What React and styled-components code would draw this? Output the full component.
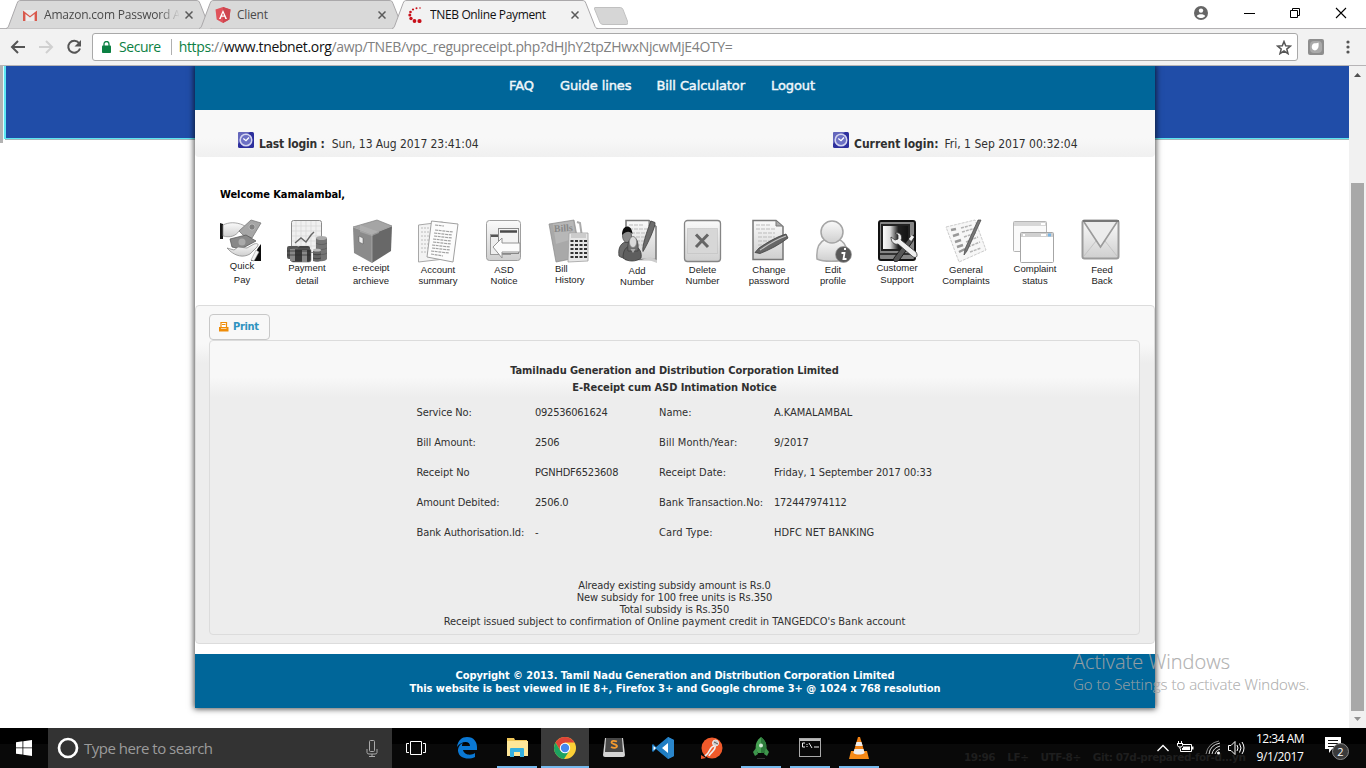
import React from "react";
import styled, { createGlobalStyle } from "styled-components";

const GlobalStyle = createGlobalStyle`
  * { box-sizing: border-box; }
  html, body { margin: 0; padding: 0; overflow: hidden; background: #fff; }
  svg { display: block; flex: none; }
`;

const UI = `"Open Sans", "Noto Sans", sans-serif`;
const TAHOMA = `"DejaVu Sans Condensed", "DejaVu Sans", sans-serif`;
const VERDANA = `"DejaVu Sans", sans-serif`;

const Screen = styled.div`
  width: 1366px;
  height: 768px;
  display: flex;
  flex-direction: column;
  overflow: hidden;
  white-space: nowrap;
`;

/* ---------- browser chrome ---------- */
const TabStrip = styled.div`
  height: 29px;
  flex: none;
  display: flex;
  padding-left: 6px;
  background: linear-gradient(#b4b2b4, #b4b2b4) left bottom / 100% 1px no-repeat #fff;
`;
const TabBox = styled.div`
  position: relative;
  width: 206px;
  height: 29px;
  margin-right: -13px;
  z-index: ${(p) => (p.$active ? 2 : 1)};
  display: flex;
  align-items: center;
  padding: 1px 19px 0 16px;
`;
const TabShape = styled.svg`
  position: absolute;
  left: 0;
  top: 0;
`;
const TabIcon = styled.span`
  position: relative;
  width: 16px;
  margin-right: 6px;
`;
const TabTitle = styled.span`
  position: relative;
  flex: 1;
  min-width: 0;
  overflow: hidden;
  font: 12px/18px ${UI};
  letter-spacing: ${(p) => p.$ls || "-0.36px"};
  color: ${(p) => (p.$active ? "#111" : "#4a4a4a")};
  ${(p) => p.$fade && "-webkit-mask-image: linear-gradient(90deg, #000 115px, transparent 136px);"}
`;
const TabClose = styled.svg`
  position: relative;
  margin-left: 6px;
`;
const NewTab = styled.svg`
  margin: 7px 0 0 9px;
`;
const WindowButtons = styled.div`
  margin-left: auto;
  display: flex;
  align-items: flex-start;
  padding: 6px 19px 0 0;
`;
const ProfileIcon = styled.svg`margin-right: 36px;`;
const MinIcon = styled.svg`margin-right: 35px;`;
const MaxIcon = styled.svg`margin-right: 34px;`;

const Toolbar = styled.div`
  height: 37px;
  flex: none;
  display: flex;
  align-items: center;
  background: #f2f2f2;
  border-bottom: 1px solid #b6b4b6;
  padding: 0 9px 0 10px;
`;
const NavIcons = styled.div`
  display: flex;
  gap: 12px;
  width: 82px;
`;
const AddressBar = styled.div`
  width: 1206px;
  height: 28px;
  display: flex;
  align-items: center;
  background: #fff;
  border: 1px solid #a9a9a9;
  border-radius: 3px;
  padding: 0 5px 0 9px;
`;
const Secure = styled.span`
  font: 14px/20px ${UI};
  letter-spacing: -0.45px;
  color: #0b8043;
  margin-left: 8px;
  padding-right: 10px;
  border-right: 1px solid #b0b0b0;
  height: 16px;
  line-height: 15px;
`;
const Url = styled.span`
  font: 14px/20px ${UI};
  letter-spacing: -0.35px;
  color: ${(p) => p.$color};
`;
const UrlBox = styled.span`
  flex: 1;
  padding-left: 7px;
`;
const ToolbarEnd = styled.div`
  flex: 1;
  display: flex;
  align-items: center;
  justify-content: space-between;
  padding: 0 7px 0 10px;
`;

/* ---------- viewport ---------- */
const Viewport = styled.div`
  height: 662px;
  flex: none;
  display: flex;
`;
const PageArea = styled.div`
  flex: 1;
  padding-left: 195px;
  background:
    linear-gradient(#b3b3b3, #b3b3b3) 0 0 / 3px 77px no-repeat,
    linear-gradient(#dff, #dff) 3px 0 / 1px 74px no-repeat,
    linear-gradient(#5ce6f2, #5ce6f2) 4px 0 / 2px 73px no-repeat,
    linear-gradient(#204da8 0 72px, #5ce6f2 72px 73px, #a3b9b9 73px 74px, transparent 74px) 5px 0 / 100% 74px no-repeat,
    #fff;
`;
const Page = styled.div`
  width: 960px;
  height: 642px;
  display: flex;
  flex-direction: column;
  background: #fff;
  box-shadow: 0 0 6px 1px rgba(0, 0, 0, 0.7);
  clip-path: inset(0 -12px -12px -12px);
`;
const Nav = styled.nav`
  height: 44px;
  background: #006699;
  display: flex;
  padding: 11px 0 0 314px;
`;
const NavLink = styled.a`
  font: 13px/18px ${VERDANA};
  -webkit-text-stroke: 0.45px #f0f7fb;
  letter-spacing: -0.1px;
  color: #f0f7fb;
  width: ${(p) => p.$w}px;
`;
const LoginBar = styled.div`
  height: 47px;
  display: flex;
  padding: 22px 0 0 43px;
  background: linear-gradient(#f8f8f8 60%, #f0f0f0);
  border-radius: 0 0 4px 4px;
`;
const LoginItem = styled.div`
  display: flex;
  flex: none;
  width: ${(p) => p.$w}px;
`;
const LoginText = styled.span`
  font: ${(p) => (p.$bold ? "bold" : "normal")} 12px/16px ${TAHOMA};
  letter-spacing: ${(p) => p.$ls};
  color: #303030;
  margin: 4px 0 0 ${(p) => p.$gap}px;
`;
const Welcome = styled.div`
  height: 61px;
  padding: 30px 0 0 25px;
  font: bold 11px/15px ${TAHOMA};
  letter-spacing: -0.07px;
  color: #000;
`;
const Shortcuts = styled.div`
  height: 87px;
  display: flex;
  padding-left: 12px;
`;
const Shortcut = styled.div`
  width: 66px;
  height: 87px;
  flex: none;
`;
const ShortcutLabel = styled.div`
  margin-top: ${(p) => p.$top}px;
  padding-left: ${(p) => Math.max(p.$dx, 0) * 2}px;
  padding-right: ${(p) => Math.max(-p.$dx, 0) * 2}px;
  font: 9.5px/${(p) => p.$lh}px "Liberation Sans", Arial, sans-serif;
  color: #1c1c1c;
  display: flex;
  flex-direction: column;
  align-items: ${(p) => (p.$left ? "flex-start" : "center")};
`;
const Panel = styled.section`
  height: 339px;
  border: 1px solid #dcdcdc;
  border-radius: 4px;
  background: linear-gradient(#f8f8f8 38px, #ededed 57px);
  padding: 8px 14px 0 13px;
`;
const PrintButton = styled.button`
  display: flex;
  align-items: center;
  width: 61px;
  height: 26px;
  margin: 0;
  padding: 0 0 0 9px;
  border: 1px solid #c8c8c8;
  border-radius: 4px;
  background: #f8f8f8;
`;
const PrintText = styled.span`
  font: bold 11px/16px ${TAHOMA};
  letter-spacing: -0.35px;
  color: #2e93bf;
  margin-left: 4px;
`;
const Receipt = styled.div`
  width: 931px;
  height: 295px;
  border: 1px solid #dcdcdc;
  border-radius: 4px;
  background: linear-gradient(#f8f8f8 36px, #ededed 56px);
  padding-top: 21px;
`;
const ReceiptTitle = styled.div`
  text-align: center;
  font: bold 11px/17px ${TAHOMA};
  letter-spacing: -0.06px;
  color: #303030;
`;
const Details = styled.div`
  display: grid;
  grid-template-columns: 118.5px 124px 115px 200px;
  grid-auto-rows: 30px;
  margin: 2px 0 0 206.5px;
`;
const Cell = styled.span`
  font: 11px/30px ${TAHOMA};
  letter-spacing: ${(p) => p.$ls}px;
  color: #303030;
`;
const Notes = styled.div`
  margin-top: 32px;
`;
const Note = styled.div`
  text-align: center;
  font: 11px/12px ${TAHOMA};
  letter-spacing: ${(p) => p.$ls}px;
  color: #303030;
`;
const Footer = styled.footer`
  height: 54px;
  margin-top: 10px;
  padding-top: 15px;
  background: #006699;
`;
const FooterLine = styled.div`
  text-align: center;
  font: bold 11px/13px ${TAHOMA};
  letter-spacing: ${(p) => p.$ls};
  color: #fff;
`;
const Scrollbar = styled.div`
  width: 17px;
  background: #f1f1f1;
  display: flex;
  flex-direction: column;
  align-items: center;
`;
const Thumb = styled.div`
  width: 13px;
  height: 528px;
  margin: 100px 0 0;
  background: #a8a8a8;
`;
const Watermark = styled.div`
  position: absolute;
  left: 1073px;
  top: 649px;
  color: rgba(165, 165, 165, 0.85);
  font-family: ${UI};
`;
const WatermarkTitle = styled.div`
  font-weight: 300;
  font-size: 20px;
  line-height: 26px;
  -webkit-text-stroke: 0.2px rgba(165, 165, 165, 0.85);
`;
const WatermarkSub = styled.div`
  font-weight: 300;
  font-size: 15px;
  line-height: 19px;
  letter-spacing: -0.01px;
  -webkit-text-stroke: 0.2px rgba(165, 165, 165, 0.85);
`;

/* ---------- taskbar ---------- */
const Taskbar = styled.div`
  position: relative;
  height: 40px;
  flex: none;
  display: flex;
  background: linear-gradient(#000 16px, #090909 16px);
`;
const Start = styled.div`
  width: 48px;
  padding: 12px 0 0 16px;
`;
const Search = styled.div`
  width: 344px;
  background: #333;
  display: flex;
  align-items: center;
  padding: 0 14px 0 8px;
`;
const SearchText = styled.span`
  flex: 1;
  margin-left: 4px;
  font: 15px/20px ${UI};
  letter-spacing: -0.5px;
  color: #9b9b9b;
`;
const AppSlot = styled.div`
  width: ${(p) => p.$w || 49}px;
  height: 40px;
  display: flex;
  align-items: center;
  justify-content: center;
  background:
    ${(p) => (p.$open ? "linear-gradient(#76b9ed, #76b9ed) center bottom / " + p.$open + "px 2px no-repeat," : "")}
    ${(p) => (p.$active ? "#3b3b3b" : "transparent")};
`;
const Ghost = styled.div`
  position: absolute;
  left: 964px;
  top: 20px;
  display: flex;
  gap: 12px;
  font: bold 10.5px/18px "DejaVu Sans", sans-serif;
  letter-spacing: -0.45px;
  color: #1e1e1e;
`;
const Tray = styled.div`
  position: relative;
  margin-left: auto;
  display: flex;
  align-items: center;
  padding-right: 17px;
`;
const WifiIcon = styled.svg`margin-left: 2px;`;
const SpeakerIcon = styled.svg`margin-left: 1px;`;
const Clock = styled.div`
  width: 62px;
  margin: 0 14px 0 1px;
  text-align: center;
  font: 12px/18px ${UI};
  letter-spacing: -0.5px;
  color: #fff;
`;
const DateText = styled.div`
  letter-spacing: -0.35px;
`;

/* ---------- browser icons ---------- */
const Gmail = () => (
  <svg width="16" height="16" viewBox="0 0 16 16">
    <path d="M1 3h14v11H1z" fill="#ececec" />
    <path d="M1 14V3.4L8 9l7-5.6V14h-2.400V6.900L8 10.600 3.400 6.900V14z" fill="#d9594c" />
  </svg>
);
const Angular = () => (
  <svg width="16" height="16" viewBox="0 0 16 16">
    <path d="M8 0l7.500 2.600-1.200 9.800L8 16l-6.300-3.600L.5 2.600z" fill="#e0525b" />
    <path d="M8 0l7.500 2.600-1.200 9.800L8 16z" fill="#ce4650" />
    <path d="M8 3l-4 9h1.700l.8-2.200h3L10.300 12H12zM8 6l1.100 2.600H6.900z" fill="#fff" fillRule="evenodd" />
  </svg>
);
const Dots = () => (
  <svg width="16" height="16" viewBox="0 0 16 16" fill="#c8101a">
    <circle cx="12" cy="1" r=".8" /><circle cx="8.500" cy="1.200" r="1" /><circle cx="5" cy="2.500" r="1.100" />
    <circle cx="2.500" cy="5" r="1.300" /><circle cx="1.800" cy="8" r="1.500" /><circle cx="3" cy="11.500" r="1.700" />
    <circle cx="6.500" cy="14" r="1.900" /><circle cx="11.500" cy="14" r="2.100" />
  </svg>
);

function Tab({ icon, title, active, fade, ls }) {
  return (
    <TabBox $active={active}>
      <TabShape width="206" height="29" viewBox="0 0 206 29">
        <path
          d="M0 28.500C2 28 2.500 26.500 3 25L11 3.500C12 1 12.500.5 15 .5H190C192.500.5 193 1 194 3.500L202.500 25C203 27 204 28.500 206 28.500"
          fill={active ? "#f2f2f2" : "#d9d9d9"}
          stroke="#aaa8aa"
        />
        {active && <path d="M2 28.500H204" stroke="#f2f2f2" />}
      </TabShape>
      <TabIcon>{icon}</TabIcon>
      <TabTitle $active={active} $fade={fade} $ls={ls}>{title}</TabTitle>
      <TabClose width="8" height="8" viewBox="0 0 8 8">
        <path d="M.5.5l7 7M7.500.5l-7 7" stroke="#5a5a5a" strokeWidth="1.500" />
      </TabClose>
    </TabBox>
  );
}

const ClockIcon = () => (
  <svg width="16" height="16" viewBox="0 0 16 16">
    <rect width="16" height="16" rx="1.500" fill="#2d2f9d" />
    <path d="M0 1.500Q0 0 1.500 0H12L0 12z" fill="#6668bd" />
    <circle cx="8" cy="8" r="5.800" fill="#6c70c4" stroke="#d4d5f0" strokeWidth="1.500" />
    <path d="M5.300 6.500L8 8.700l3-3.200" fill="none" stroke="#fff" strokeWidth="1.300" />
  </svg>
);

/* ---------- shortcut drawings, each on a 66 x 47 field ---------- */
const Art = ({ children }) => (
  <svg width="66" height="47" viewBox="0 0 66 47">
    <defs>
      <linearGradient id="g1" x2="0" y2="1"><stop stopColor="#fafafa" /><stop offset="1" stopColor="#cfcfcf" /></linearGradient>
      <linearGradient id="g4" x2="1" y2="0"><stop stopColor="#fff" /><stop offset=".3" stopColor="#ddd" /><stop offset=".6" stopColor="#222" /><stop offset="1" stopColor="#111" /></linearGradient>
    </defs>
    {children}
  </svg>
);

const QuickPayArt = () => (
  <Art>
    <path d="M13 5l3 1v15h-3z" fill="#161616" />
    <path d="M16 7c6-3 13-3 20 0l5 3c1 2-2 3-5 2l-4 1c-3 5-9 7-16 5z" fill="url(#g1)" stroke="#858585" strokeWidth=".7" />
    <path d="M32 13L44 2l10 3-9 15-9-3z" fill="#a6a6a6" stroke="#7a7a7a" strokeWidth=".8" />
    <circle cx="45" cy="9" r="3" fill="#808080" stroke="#ccc" strokeWidth=".6" />
    <path d="M23 21l16-4 10 6-15 8-9-2z" fill="#888" stroke="#5c5c5c" strokeWidth=".8" />
    <circle cx="35" cy="24" r="3.500" fill="#aaa" />
    <path d="M20 30l7 2 4-3 9 1 7-4c4-1 5 0 3 3l-7 7c-7 4-14 2-20-3z" fill="url(#g1)" stroke="#808080" strokeWidth=".7" />
    <path d="M44 43l7-13 3-4v17z" fill="#0d0d0d" />
    <path d="M44 42l5-10 3 2-5 9z" fill="#f4f4f4" stroke="#888" strokeWidth=".5" />
  </Art>
);
const PaymentArt = () => (
  <Art>
    <rect x="18.500" y="2.500" width="30" height="32" rx="2" fill="#f0f0f0" stroke="#8a8a8a" />
    <path d="M23 3v30M28 3v30M33 3v30M38 3v30M43 3v30M19 8h29M19 13h29M19 18h29M19 23h29M19 28h29" stroke="#d5d5d5" strokeWidth=".7" />
    <path d="M22 25l6-5 5 4 5-7 3-3" fill="none" stroke="#666" strokeWidth="1.400" />
    <path d="M43 20h11v21c-2 3-9 3-11 0z" fill="#757575" />
    <ellipse cx="48.500" cy="20" rx="5.500" ry="2" fill="#aaa" />
    <path d="M43 25c3 2 8 2 11 0M43 30c3 2 8 2 11 0M43 35c3 2 8 2 11 0" fill="none" stroke="#585858" strokeWidth=".7" />
    <rect x="14" y="28" width="12" height="13" rx="2" fill="#555" /><rect x="25" y="28" width="12" height="14" rx="2" fill="#444" />
    <rect x="18" y="31" width="20" height="13" rx="2" fill="#383838" stroke="#777" strokeWidth=".6" />
    <path d="M17 31h5v12h-5zM29 32h5v12h-5z" fill="#888" /><path d="M14 33h24M14 37h24" stroke="#2c2c2c" strokeWidth=".7" />
    <path d="M40 33h8v10c-2 1-6 1-8 0z" fill="#666" /><ellipse cx="44" cy="32" rx="4" ry="1.600" fill="#bbb" />
    <path d="M40 36c2 1 6 1 8 0M40 40c2 1 6 1 8 0" fill="none" stroke="#333" strokeWidth=".7" />
  </Art>
);
const BoxArt = () => (
  <Art>
    <path d="M14 9L38 2l15 6-20 8z" fill="#a5a5a5" stroke="#808080" strokeWidth=".7" />
    <path d="M14 9l19 7v29L15 35z" fill="#8b8b8b" />
    <path d="M33 16l20-8-1 25-19 12z" fill="#686868" />
    <path d="M21 7l19 7v1l-7 3-12-4z" fill="#b8b8b8" opacity=".55" />
    <path d="M20 18l4 2v6l-4-2z" fill="#eee" stroke="#555" strokeWidth=".5" />
    <path d="M14 9l19 7 20-8M33 16v29" fill="none" stroke="#b4b4b4" strokeWidth=".7" />
  </Art>
);
const PagesArt = () => (
  <Art>
    <path d="M13.500 7l24-3 2 37-26 3z" fill="#f3f3f3" stroke="#a8a8a8" />
    <path d="M16 10h12M16 14h10M16 18h10M16 22h8M16 26h8M16 30h8M16 34h7" stroke="#bcbcbc" strokeDasharray="2 1" />
    <path d="M26.500 3l26.500 3-5 38-26-5z" fill="#fcfcfc" stroke="#a0a0a0" />
    <path d="M30 7l9 1M30 12l18 2M29 15l18 2M29 18l18 2M28 21l18 2M28 24l18 2M27 27l18 2M27 30l18 2M26 33l18 2M26 36l12 2" stroke="#a2a2a2" strokeWidth="1.200" strokeDasharray="3 .7" />
  </Art>
);
const AsdArt = () => (
  <Art>
    <rect x="15.500" y="2.500" width="34" height="40" rx="3" fill="url(#g1)" stroke="#a0a0a0" />
    <rect x="19.500" y="16.500" width="20" height="20" fill="#eee" stroke="#999" /><path d="M20 18h18" stroke="#555" strokeWidth="2" />
    <rect x="27.500" y="10.500" width="20" height="25" fill="#f3f3f3" stroke="#888" /><path d="M29 13.500h17" stroke="#4a4a4a" strokeWidth="2.500" />
    <path d="M22 29l9-9v5h18v9H31v6z" fill="#fcfcfc" stroke="#949494" />
  </Art>
);
const BillsArt = () => (
  <Art>
    <path d="M12 6l25-4 7 37-25 5z" fill="#a9a9a9" stroke="#8a8a8a" strokeWidth=".7" />
    <path d="M16 6L36 3l3 17-20 6z" fill="#b7b7b7" />
    <text x="17" y="14" fontFamily="Liberation Serif" fontSize="10" fontWeight="bold" fill="#888" transform="rotate(-3 17 14)">Bills</text>
    <path d="M40 4l3 1 4 28" fill="none" stroke="#aaa" strokeWidth="2" />
    <path d="M32 15h19v28l-20 1z" fill="#e7e7e7" stroke="#a0a0a0" strokeWidth=".8" />
    <path d="M34 16h15v4H34z" fill="#ccc" />
    <path d="M35 22v19M39.500 22v19M44 22v19M48.500 22v19" stroke="#333" strokeWidth="3" strokeDasharray="2 2" />
  </Art>
);
const PaperArt = ({ x = 17 }) => (
  <>
    <path d={`M${x + 1} 2.500h23l7 6v33h-30z`} fill="url(#g1)" stroke="#777" strokeWidth="1.500" />
    <path d={`M${x + 24} 3v5h6`} fill="#aaa" stroke="#777" />
    <path d={`M${x + 4} 7h15M${x + 4} 11h19M${x + 6} 15h17M${x + 6} 19h17M${x + 6} 23h16M${x + 6} 27h13`} stroke="#bbb" strokeDasharray="4 1" />
  </>
);
const AddArt = () => (
  <Art>
    <PaperArt x={22} />
    <path d="M48 3l4 1.500c1 3-7 21-12 29-1.500-4 4-21 8-30.500z" fill="#6c6c6c" stroke="#404040" strokeWidth=".8" />
    <path d="M16 38c-1-7 1-12 6-14h4c4 2 6 7 5 14-4 3-11 3-15 0z" fill="#6c6c6c" stroke="#3a3a3a" strokeWidth=".8" />
    <ellipse cx="24" cy="18" rx="4.500" ry="6.500" fill="#8a8a8a" stroke="#333" strokeWidth=".6" />
    <path d="M19 17c0-11 10-11 10.500-1-3-3-6-3-10.500 1z" fill="#0c0c0c" />
    <path d="M20 40c0-8 3-11 7-12h5c5 2 7 7 6 12-5 4-13 4-18 0z" fill="#5e5e5e" stroke="#3c3c3c" strokeWidth=".8" />
    <path d="M25 33c-2-18 12-19 10 0z" fill="#6e6e6e" stroke="#3c3c3c" strokeWidth=".7" />
    <ellipse cx="30" cy="24" rx="3.600" ry="5.500" fill="#dadada" stroke="#777" strokeWidth=".6" />
    <path d="M27.500 31l2.500 4 2.500-4z" fill="#aaa" />
    <path d="M38 42l9-3 7 3v3l-8-3z" fill="#ccc" />
  </Art>
);
const DeleteArt = () => (
  <Art>
    <rect x="15.500" y="2.500" width="36" height="41" rx="3" fill="url(#g1)" stroke="#858585" strokeWidth="1.300" />
    <rect x="18.500" y="10.500" width="30" height="25" fill="#d7d7d7" stroke="#bbb" strokeDasharray="1 1" />
    <path d="M27 16.500l12 12.500M39 16.500L27 29" stroke="#666" strokeWidth="3" />
  </Art>
);
const ChangeArt = () => (
  <Art>
    <PaperArt x={17} />
    <path d="M20 34.500L24 30c9-6 17-11 27-14l2 4c-9 7-19 12-28 15.500z" fill="#666" stroke="#3e3e3e" strokeWidth=".8" />
    <path d="M25 32c9-6 17-11 26-14" stroke="#c4c4c4" fill="none" strokeWidth="1.200" />
  </Art>
);
const ProfileArt = () => (
  <Art>
    <path d="M16 41c-1-10 2-17 9-20h12c8 3 10 11 8 20-6 3-23 3-29 0z" fill="url(#g1)" stroke="#aaa" strokeWidth="1.500" />
    <circle cx="31" cy="14" r="11" fill="url(#g1)" stroke="#a5a5a5" strokeWidth="1.500" />
    <circle cx="42.500" cy="36.500" r="8" fill="#595959" stroke="#999" strokeWidth=".7" />
    <path d="M43 31h2M40.500 35h3l-1 6h3" stroke="#fff" strokeWidth="1.800" fill="none" />
  </Art>
);
const SupportArt = () => (
  <Art>
    <rect x="12" y="3" width="36" height="39" rx="2" fill="#858585" stroke="#111" strokeWidth="2" />
    <rect x="15" y="7" width="27" height="25" fill="url(#g4)" stroke="#222" strokeWidth="2" />
    <path d="M13 36h33" stroke="#333" strokeWidth="2" />
    <path d="M43 19l4-2-1 6-13 18c-3 4-8 3-6-1z" fill="#555" stroke="#1c1c1c" />
    <path d="M43 22l3-4" stroke="#eee" strokeWidth="3" />
    <path d="M24 19l4 3 3-1v-4l-3-2c5-1 8 3 6 7l15 12c3 5-1 7-4 4L31 26c-4 1-7-2-7-7z" fill="#eee" stroke="#333" strokeWidth=".8" />
  </Art>
);
const ComplaintsArt = () => (
  <Art>
    <path d="M13 9l29-7 11 30-27 12z" fill="#f7f7f7" stroke="#ccc" strokeDasharray="3 1" />
    <path d="M18 12l5-1M20 18l6-2M22 24l6-2M24 29l6-2M26 34l6-3" stroke="#999" strokeWidth="2.500" />
    <path d="M28 10l11-3M29 14l14-4M31 19l12-4M33 24l12-5M35 29l12-5M37 34l11-4" stroke="#b5b5b5" strokeWidth="1.500" strokeDasharray="3 1" />
    <path d="M45 2h3L34 33l-3 4 1-6z" fill="#777" stroke="#444" strokeWidth=".7" />
  </Art>
);
const StatusArt = () => (
  <Art>
    <rect x="14.500" y="3.500" width="33" height="30" rx="1" fill="#fafafa" stroke="#b4b4b4" /><path d="M15 6h32" stroke="#d7d7d7" strokeWidth="4" />
    <rect x="21.500" y="14.500" width="33" height="30" rx="1" fill="#fff" stroke="#a6a6a6" /><path d="M22 17h32" stroke="#d0d0d0" strokeWidth="4" />
    <path d="M49 17h3" stroke="#79b5e4" strokeWidth="3" /><path d="M24 17h2M42 17h5M42 6h4" stroke="#fff" strokeWidth="2" />
  </Art>
);
const FeedbackArt = () => (
  <Art>
    <rect x="17.500" y="2.500" width="36" height="38" rx="2" fill="url(#g1)" stroke="#9b9b9b" strokeWidth="2" />
    <path d="M19 38l12-15M52 38L40 23" stroke="#c4c4c4" fill="none" />
    <path d="M19 4l16.500 25L52 4" fill="#ececec" stroke="#9b9b9b" strokeWidth="1.600" />
    <path d="M18 3h36" stroke="#777" strokeWidth="2" />
  </Art>
);

const shortcuts = [
  { art: QuickPayArt, lines: ["Quick", "Pay"], top: -6, lh: 13.500, dx: 2 },
  { art: PaymentArt, lines: ["Payment", "detail"], top: -3, lh: 12.500, dx: 1 },
  { art: BoxArt, lines: ["e-receipt", "archieve"], top: -3, lh: 12.500, dx: -1 },
  { art: PagesArt, lines: ["Account", "summary"], top: -1, lh: 11, dx: 0 },
  { art: AsdArt, lines: ["ASD", "Notice"], top: -1, lh: 11, dx: 0 },
  { art: BillsArt, lines: ["Bill", "History"], top: -2, lh: 11, dx: 9, left: true },
  { art: AddArt, lines: ["Add", "Number"], top: 0, lh: 11, dx: 1 },
  { art: DeleteArt, lines: ["Delete", "Number"], top: -1, lh: 11, dx: 0.500 },
  { art: ChangeArt, lines: ["Change", "password"], top: -1, lh: 11, dx: 1 },
  { art: ProfileArt, lines: ["Edit", "profile"], top: -1, lh: 11, dx: -1 },
  { art: SupportArt, lines: ["Customer", "Support"], top: -3, lh: 12, dx: -3 },
  { art: ComplaintsArt, lines: ["General", "Complaints"], top: -1, lh: 11, dx: 0 },
  { art: StatusArt, lines: ["Complaint", "status"], top: -2, lh: 11.500, dx: 3 },
  { art: FeedbackArt, lines: ["Feed", "Back"], top: -1, lh: 11, dx: 4 },
];

const details = [
  ["Service No:", -0.12], ["092536061624", -0.25], ["Name:", 0], ["A.KAMALAMBAL", 0],
  ["Bill Amount:", -0.1], ["2506", -0.2], ["Bill Month/Year:", 0.12], ["9/2017", 0],
  ["Receipt No", -0.05], ["PGNHDF6523608", -0.2], ["Receipt Date:", 0], ["Friday, 1 September 2017 00:33", -0.08],
  ["Amount Debited:", -0.1], ["2506.0", -0.2], ["Bank Transaction.No:", -0.02], ["172447974112", -0.25],
  ["Bank Authorisation.Id:", -0.1], ["-", 0], ["Card Type:", 0.15], ["HDFC NET BANKING", 0.08],
];

const notes = [
  ["Already existing subsidy amount is Rs.0", -0.13],
  ["New subsidy for 100 free units is Rs.350", -0.1],
  ["Total subsidy is Rs.350", -0.12],
  ["Receipt issued subject to confirmation of Online payment credit in TANGEDCO's Bank account", -0.04],
];

/* ---------- taskbar icons ---------- */
const Edge = () => (
  <svg width="22" height="22" viewBox="0 0 22 22">
    <path d="M1 10C2 3 6 0 11 0c7 0 10 5 10 10v3H7c1 5 8 6 12 3v4c-6 3-16 2-17-6 0-4 2-7 5-8-1 1-1 2-1 3h8c0-6-9-5-13 1z" fill="#0a78d4" />
  </svg>
);
const Explorer = () => (
  <svg width="22" height="20" viewBox="0 0 22 20">
    <path d="M1 0h7l1 2h12v16H1z" fill="#efc65a" /><path d="M1 3h21v15H1z" fill="#ffe799" />
    <path d="M4 19v-8q0-1 1-1h12q1 0 1 1v8h-4v-5H8v5z" fill="#35b0df" />
  </svg>
);
const Chrome = () => (
  <svg width="22" height="22" viewBox="0 0 22 22">
    <circle cx="11" cy="11" r="11" fill="#fbcf36" />
    <path d="M1.500 5.500A11 11 0 0 1 20.500 5.500H11L6.500 14z" fill="#dd4438" />
    <path d="M1.500 5.500A11 11 0 0 0 10 22L15.500 13.500 6.500 14z" fill="#1da260" />
    <circle cx="11" cy="11" r="5.200" fill="#fff" /><circle cx="11" cy="11" r="4.200" fill="#4587ee" />
  </svg>
);
const Sublime = () => (
  <svg width="22" height="22" viewBox="0 0 22 22">
    <path d="M2 1h18l2 17q0 2-2 2H2q-2 0-2-2z" fill="#d5d5d5" /><path d="M3 1h16l1 14H2z" fill="#474747" />
    <path d="M14 4.500c-3-1.200-5.500-.8-5.500.9s5.500 1.600 5.500 3.700-3.500 2.300-6 .9" fill="none" stroke="#f39a2e" strokeWidth="1.800" />
  </svg>
);
const Code = () => (
  <svg width="24" height="24" viewBox="0 0 24 24">
    <path d="M17 1l6 3v16l-6 3L5 13l-3 3-1-1V9l1-1 3 3z" fill="#1f7dc3" />
    <path d="M17 1l6 3v16l-6 3z" fill="#2a86cb" />
    <path d="M17 7v10l-6-5zM2.500 10l2.500 2-2.500 2.500z" fill="#fff" />
  </svg>
);
const Postman = () => (
  <svg width="22" height="22" viewBox="0 0 22 22">
    <circle cx="11" cy="11" r="10.500" fill="#f05a2b" /><path d="M0 18l5 3-5 1z" fill="#f05a2b" />
    <circle cx="14.500" cy="6" r="3" fill="#ccc" stroke="#eee" /><path d="M13 9c-5 1-3 6-9 10M14 9c1 5-5 6-6 10" stroke="#eee" strokeWidth="1.700" fill="none" /><path d="M13 5l4 2" stroke="#555" />
  </svg>
);
const Rocket = () => (
  <svg width="18" height="24" viewBox="0 0 18 24">
    <path d="M9 1C4 5 3 9 4 14l2 3h6l2-3c1-5 0-9-5-13z" fill="#45a052" /><path d="M9 1c5 4 6 8 5 13l-2 3H9z" fill="#2d7b3b" />
    <path d="M4 12l-3 4 2 4 3-2zM14 12l3 4-2 4-3-2z" fill="#3e964c" /><circle cx="9" cy="9.500" r="2" fill="#d5ead8" /><path d="M5 22.500h8" stroke="#333" />
  </svg>
);
const Cmd = () => (
  <svg width="22" height="20" viewBox="0 0 22 20">
    <rect x=".5" y=".5" width="21" height="18" fill="#080808" stroke="#aaa" /><path d="M1 2h20" stroke="#bbb" strokeWidth="2" />
    <path d="M6 5H3.500v4H6M8 6v1M8 8v1M10 5l3 5M15 9h5" stroke="#eee" fill="none" />
  </svg>
);
const Vlc = () => (
  <svg width="22" height="24" viewBox="0 0 22 24">
    <path d="M3 15h16l2 8H1z" fill="#f58a16" /><path d="M10 1h2l5 17c-3 3-9 3-12 0z" fill="#f38214" />
    <path d="M8.500 6h5l1.200 4H7.300zM6.500 13h9l1.200 4c-3 2-8.500 2-11.400 0z" fill="#eee" />
  </svg>
);

export default function App() {
  return (
    <Screen>
      <GlobalStyle />
      <TabStrip>
        <Tab icon={<Gmail />} title="Amazon.com Password A" fade ls="-0.2px" />
        <Tab icon={<Angular />} title="Client" ls="-0.2px" />
        <Tab icon={<Dots />} title="TNEB Online Payment" active />
        <NewTab width="34" height="18" viewBox="0 0 34 18">
          <path d="M1 .5h25.500q1.500 0 2.500 2l5 13q.5 2-2 2H9q-2 0-3-2L.5 2Q0 .5 1 .5z" fill="#d6d6d6" stroke="#c0c0c0" />
        </NewTab>
        <WindowButtons>
          <ProfileIcon width="14" height="14" viewBox="0 0 14 14">
            <circle cx="7" cy="7" r="7" fill="#666" /><circle cx="7" cy="4.600" r="2.200" fill="#fff" /><path d="M2.800 10C4 7.500 10 7.500 11.200 10c-2 2.700-6.400 2.700-8.400 0z" fill="#fff" />
          </ProfileIcon>
          <MinIcon width="11" height="14"><path d="M0 7.500h11" stroke="#000" /></MinIcon>
          <MaxIcon width="11" height="13"><path d="M.5 4.500h7v7h-7zM2.500 4V2.500h7v7H8" fill="none" stroke="#000" /></MaxIcon>
          <svg width="12" height="14"><path d="M1 2l10 10M11 2L1 12" stroke="#000" strokeWidth="1.100" /></svg>
        </WindowButtons>
      </TabStrip>

      <Toolbar>
        <NavIcons>
          <svg width="16" height="16" viewBox="0 0 16 16"><path d="M15 8H2M8 2L2 8l6 6" fill="none" stroke="#555" strokeWidth="2" /></svg>
          <svg width="16" height="16" viewBox="0 0 16 16"><path d="M1 8h13M8 2l6 6-6 6" fill="none" stroke="#d0d0d0" strokeWidth="2" /></svg>
          <svg width="16" height="16" viewBox="0 0 16 16"><path d="M13 4A6 6 0 1 0 14 9.500" fill="none" stroke="#555" strokeWidth="2" /><path d="M15 1v6.500H8.500z" fill="#555" /></svg>
        </NavIcons>
        <AddressBar>
          <svg width="9" height="12" viewBox="0 0 9 12"><rect y="4.500" width="9" height="7.500" rx=".8" fill="#0b8043" /><path d="M2 5V3a2.500 2.500 0 0 1 5 0v2" fill="none" stroke="#0b8043" strokeWidth="1.300" /></svg>
          <Secure>Secure</Secure>
          <UrlBox>
            <Url $color="#0b8043">https</Url>
            <Url $color="#808080">://</Url>
            <Url $color="#111">www.tnebnet.org</Url>
            <Url $color="#808080">/awp/TNEB/vpc_regupreceipt.php?dHJhY2tpZHwxNjcwMjE4OTY=</Url>
          </UrlBox>
          <svg width="16" height="15" viewBox="0 0 16 15"><path d="M8 1.500l1.700 4.300 4.700.3-3.600 3 1.200 4.500L8 11l-4 2.600 1.200-4.500-3.600-3 4.700-.3z" fill="none" stroke="#555" strokeWidth="1.500" /></svg>
        </AddressBar>
        <ToolbarEnd>
          <svg width="16" height="16" viewBox="0 0 16 16"><rect width="16" height="16" rx="2" fill="#8e8e8e" /><rect x="2" y="2" width="12" height="12" rx="4" fill="#aaa" /><path d="M10.500 3.500c.5 4 0 7-3.500 8C3 11 3 6 5.500 4.500 7 4 9 4.500 10.500 3.500z" fill="#fff" /></svg>
          <svg width="4" height="14" viewBox="0 0 4 14" fill="#555"><circle cx="2" cy="2" r="1.600" /><circle cx="2" cy="7" r="1.600" /><circle cx="2" cy="12" r="1.600" /></svg>
        </ToolbarEnd>
      </Toolbar>

      <Viewport>
        <PageArea>
          <Page>
            <Nav>
              <NavLink $w={51}>FAQ</NavLink>
              <NavLink $w={96.500}>Guide lines</NavLink>
              <NavLink $w={114.500}>Bill Calculator</NavLink>
              <NavLink $w={60}>Logout</NavLink>
            </Nav>
            <LoginBar>
              <LoginItem $w={595}>
                <ClockIcon />
                <LoginText $bold $gap={5} $ls="-0.17px">Last login :</LoginText>
                <LoginText $gap={7} $ls="-0.07px">Sun, 13 Aug 2017 23:41:04</LoginText>
              </LoginItem>
              <LoginItem $w={260}>
                <ClockIcon />
                <LoginText $bold $gap={5} $ls="-0.02px">Current login:</LoginText>
                <LoginText $gap={6} $ls="0">Fri, 1 Sep 2017 00:32:04</LoginText>
              </LoginItem>
            </LoginBar>
            <Welcome>Welcome Kamalambal,</Welcome>
            <Shortcuts>
              {shortcuts.map(({ art: Drawing, lines, top, lh, dx, left }) => (
                <Shortcut key={lines.join(" ")}>
                  <Drawing />
                  <ShortcutLabel $top={top} $lh={lh} $dx={dx} $left={left}>
                    <span>{lines[0]}</span>
                    <span>{lines[1]}</span>
                  </ShortcutLabel>
                </Shortcut>
              ))}
            </Shortcuts>
            <Panel>
              <PrintButton>
                <svg width="10" height="10" viewBox="0 0 10 10"><path d="M2 5V.5h5.500V5" fill="#fff" stroke="#ef8c08" strokeWidth="1.200" /><path d="M3 2.500h3.500" stroke="#ef8c08" /><path d="M0 5h9.500v4.500H0z" fill="#ef8c08" /><path d="M2 6.500h5.500" stroke="#fff" strokeWidth=".6" /></svg>
                <PrintText>Print</PrintText>
              </PrintButton>
              <Receipt>
                <ReceiptTitle>Tamilnadu Generation and Distribution Corporation Limited</ReceiptTitle>
                <ReceiptTitle>E-Receipt cum ASD Intimation Notice</ReceiptTitle>
                <Details>
                  {details.map(([text, ls]) => <Cell key={text} $ls={ls}>{text}</Cell>)}
                </Details>
                <Notes>
                  {notes.map(([text, ls]) => <Note key={text} $ls={ls}>{text}</Note>)}
                </Notes>
              </Receipt>
            </Panel>
            <Footer>
              <FooterLine $ls="-0.05px">Copyright © 2013. Tamil Nadu Generation and Distribution Corporation Limited</FooterLine>
              <FooterLine $ls="-0.03px">This website is best viewed in IE 8+, Firefox 3+ and Google chrome 3+ @ 1024 x 768 resolution</FooterLine>
            </Footer>
          </Page>
        </PageArea>
        <Scrollbar>
          <svg width="17" height="17"><path d="M5 11h7L8.500 7z" fill="#505050" /></svg>
          <Thumb />
          <svg width="17" height="17"><path d="M5 6h7L8.500 10z" fill="#909090" /></svg>
        </Scrollbar>
      </Viewport>

      <Taskbar>
        <Start>
          <svg width="16" height="16" viewBox="0 0 16 16" fill="#fff"><path d="M0 2.200l6.500-.9v6.200H0zM7.300 1.200L16 0v7.500H7.300zM0 8.300h6.500v6.300L0 13.700zM7.300 8.300H16V16l-8.700-1.200z" /></svg>
        </Start>
        <Search>
          <svg width="24" height="24"><circle cx="12" cy="12" r="9" fill="none" stroke="#fff" strokeWidth="2.700" /></svg>
          <SearchText>Type here to search</SearchText>
          <svg width="12" height="17" viewBox="0 0 12 17" fill="none" stroke="#aaa"><rect x="3.500" y=".5" width="5" height="11" rx="1" /><path d="M1 9v3.500q0 1.500 2 1.500h6q2 0 2-1.500V9M6 14v3M3 16.500h6" /></svg>
        </Search>
        <AppSlot $w={48}>
          <svg width="20" height="14" viewBox="0 0 20 14" fill="none" stroke="#fff"><path d="M4.500.5h11v13h-11zM3 2.500H.5v9H3M17 2.500h2.500v9H17" /></svg>
        </AppSlot>
        <AppSlot $w={53}><Edge /></AppSlot>
        <AppSlot $w={48} $open={40}><Explorer /></AppSlot>
        <AppSlot $w={48} $open={48} $active><Chrome /></AppSlot>
        <AppSlot><Sublime /></AppSlot>
        <AppSlot><Code /></AppSlot>
        <AppSlot><Postman /></AppSlot>
        <AppSlot $open={40}><Rocket /></AppSlot>
        <AppSlot $open={40}><Cmd /></AppSlot>
        <AppSlot $open={40}><Vlc /></AppSlot>
        <Ghost>
          <span>19:96</span><span>LF÷</span><span>UTF-8÷</span><span>Git: 07d-prepared-for-d...yn</span>
        </Ghost>
        <Tray>
          <svg width="12" height="8" viewBox="0 0 12 8"><path d="M.5 7L6 1.500 11.500 7" fill="none" stroke="#fff" strokeWidth="1.300" /></svg>
          <svg width="26" height="16" viewBox="0 0 26 16">
            <path d="M13.500 4.500h9v7h-11V9" fill="none" stroke="#fff" />
            <path d="M14 6.500h7v3.500h-8V8h1zM23 6.500h1.500v3H23z" fill="#fff" />
            <path d="M9.500 1v2M12.500 1v2M8 3.500h6M8.500 4v1.500q0 1.500 2.500 1.500t2.500-1.500V4M11 7v2" fill="none" stroke="#fff" />
          </svg>
          <WifiIcon width="26" height="16" viewBox="0 0 26 16" fill="none" stroke="#ddd"><path d="M12 14Q13 5 23 3M15 14q1-6 8-8M18 14q1-4 5-5" /><path d="M9 14Q11 3 22 1" stroke="#888" /><circle cx="21.500" cy="13" r="1.500" fill="#fff" stroke="none" /></WifiIcon>
          <SpeakerIcon width="24" height="16" viewBox="0 0 24 16" fill="none" stroke="#fff"><path d="M4.500 5.500h2.500l4-4v13l-4-4H4.500zM13 5q2 3 0 6M15.500 3.500q3 4.500 0 9M18 2q4 6 0 12" /></SpeakerIcon>
          <Clock>
            <div>12:34 AM</div>
            <DateText>9/1/2017</DateText>
          </Clock>
          <svg width="24" height="24" viewBox="0 0 24 24">
            <path d="M0 1h16v12H7l-3 4v-4H0z" fill="#fff" /><path d="M3 4.500h10M3 7.500h10M3 10.500h7" stroke="#111" />
            <circle cx="15.500" cy="15.500" r="8" fill="#3a3a3a" stroke="#888" />
            <text x="15.500" y="19.500" textAnchor="middle" fontFamily="Open Sans" fontSize="11" fill="#fff">2</text>
          </svg>
        </Tray>
      </Taskbar>

      <Watermark>
        <WatermarkTitle>Activate Windows</WatermarkTitle>
        <WatermarkSub>Go to Settings to activate Windows.</WatermarkSub>
      </Watermark>
    </Screen>
  );
}
